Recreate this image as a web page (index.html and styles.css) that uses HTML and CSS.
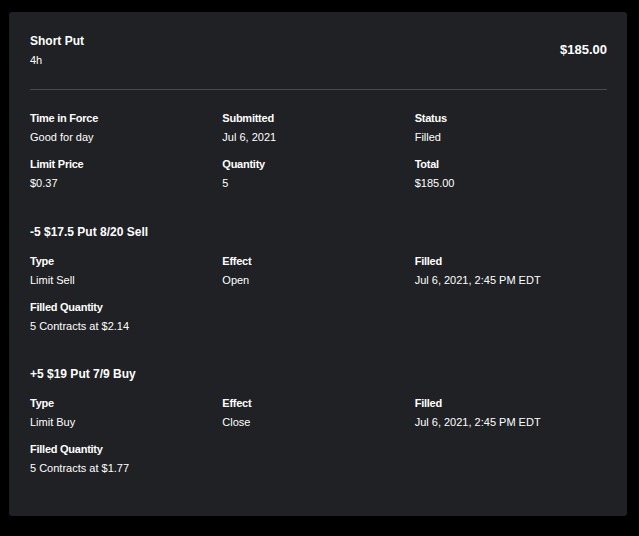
FILE: index.html
```html
<!DOCTYPE html>
<html lang="en">
<head>
<meta charset="utf-8">
<title>Short Put</title>
<link rel="stylesheet" href="styles.css">
</head>
<body>
<div class="card">
  <header class="head">
    <div class="head-left">
      <div class="title">Short Put</div>
      <div class="sub">4h</div>
    </div>
    <div class="amount">$185.00</div>
  </header>

  <div class="grid top">
    <div class="field"><div class="label">Time in Force</div><div class="value">Good for day</div></div>
    <div class="field"><div class="label">Submitted</div><div class="value">Jul 6, 2021</div></div>
    <div class="field"><div class="label">Status</div><div class="value">Filled</div></div>
    <div class="field"><div class="label">Limit Price</div><div class="value">$0.37</div></div>
    <div class="field"><div class="label">Quantity</div><div class="value">5</div></div>
    <div class="field"><div class="label">Total</div><div class="value">$185.00</div></div>
  </div>

  <section class="leg">
    <h2 class="leg-title">-5 $17.5 Put 8/20 Sell</h2>
    <div class="grid">
      <div class="field"><div class="label">Type</div><div class="value">Limit Sell</div></div>
      <div class="field"><div class="label">Effect</div><div class="value">Open</div></div>
      <div class="field"><div class="label">Filled</div><div class="value">Jul 6, 2021, 2:45 PM EDT</div></div>
      <div class="field"><div class="label">Filled Quantity</div><div class="value">5 Contracts at $2.14</div></div>
    </div>
  </section>

  <section class="leg">
    <h2 class="leg-title">+5 $19 Put 7/9 Buy</h2>
    <div class="grid">
      <div class="field"><div class="label">Type</div><div class="value">Limit Buy</div></div>
      <div class="field"><div class="label">Effect</div><div class="value">Close</div></div>
      <div class="field"><div class="label">Filled</div><div class="value">Jul 6, 2021, 2:45 PM EDT</div></div>
      <div class="field"><div class="label">Filled Quantity</div><div class="value">5 Contracts at $1.77</div></div>
    </div>
  </section>
</div>
</body>
</html>
```

FILE: styles.css
```css
html, body {
  margin: 0;
  padding: 0;
  background: #000;
}

body {
  padding: 12px 12px 0 9px;
  font-family: "Liberation Sans", Arial, sans-serif;
  color: #fff;
}

.card {
  width: 618px;
  height: 504px;
  box-sizing: border-box;
  background: #1f2124;
  border-radius: 3px;
  padding: 21px 20px 21px 21px;
}

.head {
  display: flex;
  justify-content: space-between;
  align-items: center;
  padding-bottom: 21px;
  border-bottom: 1px solid #47494d;
}

.title {
  font-size: 12px;
  font-weight: bold;
  line-height: 16px;
}

.sub {
  font-size: 11px;
  line-height: 16px;
  margin-top: 3px;
}

.amount {
  font-size: 13px;
  font-weight: bold;
  line-height: 16px;
  margin-bottom: 2px;
}

.grid {
  display: grid;
  grid-template-columns: 1fr 1fr 1fr;
  row-gap: 11px;
}

.top {
  padding-top: 20px;
  padding-bottom: 1px;
}

.label {
  font-size: 11px;
  font-weight: bold;
  line-height: 16px;
  letter-spacing: -0.25px;
}

.value {
  font-size: 11px;
  line-height: 16px;
  margin-top: 3px;
}

.leg {
  margin-top: 32px;
}

.leg-title {
  margin: 0 0 13px;
  font-size: 12px;
  font-weight: bold;
  line-height: 16px;
}
```
